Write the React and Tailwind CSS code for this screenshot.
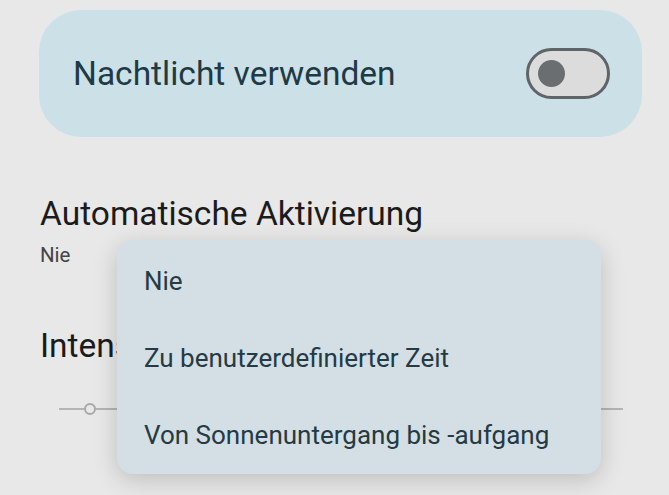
import React from "react";

function Toggle() {
    return (
        <div className="w-[84px] h-[51px] rounded-full border-[3px] border-[#5f6468] bg-[#dcdcdc] flex items-center pl-[9px]">
            <div className="w-[27px] h-[27px] rounded-full bg-[#6b6e70]" />
        </div>
    );
}

const options = ["Nie", "Zu benutzerdefinierter Zeit", "Von Sonnenuntergang bis -aufgang"];

export default function App() {
    return (
        <div className="relative w-[669px] h-[495px] overflow-hidden bg-[#e9e8e8] font-['Roboto',sans-serif] pt-[10px]">
            <div className="ml-[39px] w-[603px] h-[127px] rounded-[42px] bg-[#cce0e8] flex items-center justify-between pl-[34px] pr-[32px]">
                <span className="text-[33.5px] leading-[40px] text-[#1e3a44]">Nachtlicht verwenden</span>
                <Toggle />
            </div>

            <div className="pl-[40px] mt-[57px]">
                <h2 className="text-[33.5px] leading-[40px] text-[#1b1b1b]">Automatische Aktivierung</h2>
                <p className="mt-[9px] text-[20.5px] leading-[24px] text-[#444]">Nie</p>
                <h2 className="mt-[59px] text-[33.5px] leading-[40px] text-[#1b1b1b]">Intensität</h2>
            </div>

            <div className="mt-[33px] ml-[59px] w-[564px] h-[20px] flex items-center">
                <div className="w-[25px] h-[2px] bg-[#b4b4b4]" />
                <div className="w-[12px] h-[12px] rounded-full border-[2px] border-[#a8a8a8]" />
                <div className="flex-1 h-[2px] bg-[#b4b4b4]" />
            </div>

            <div className="absolute left-[117px] top-[240px] w-[484px] h-[234px] rounded-[16px] bg-[#d3dfe4] shadow-[0_6px_24px_rgba(0,0,0,0.18)] pl-[27px] pt-[26px] flex flex-col gap-[47px]">
                {options.map(o => (
                    <div key={o} className="text-[26px] leading-[30px] text-[#253a42]">{o}</div>
                ))}
            </div>
        </div>
    );
}
